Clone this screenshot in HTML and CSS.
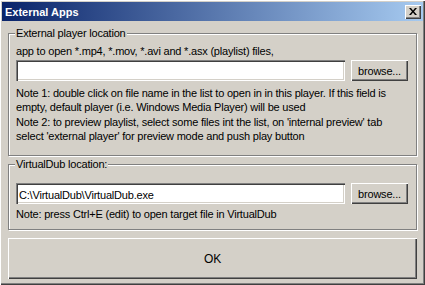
FILE: index.html
```html
<!DOCTYPE html>
<html lang="en">
<head>
    <meta charset="UTF-8">
    <title>External Apps</title>
    <link rel="stylesheet" href="styles.css">
</head>
<body>
    <div class="window">
        <div class="titlebar">
            <span class="title">External Apps</span>
            <button class="close" type="button">
                <svg width="8" height="7" viewBox="0 0 8 7">
                    <path d="M0 0h2l2 2.5 2-2.5h2l-3 3.5 3 3.5h-2l-2-2.5-2 2.5h-2l3-3.5z" fill="#000"/>
                </svg>
            </button>
        </div>

        <div class="content">
            <fieldset class="group first">
                <legend>External player location</legend>
                <p class="line">app to open *.mp4, *.mov, *.avi and *.asx (playlist) files,</p>
                <div class="row">
                    <input type="text" class="field" value="">
                    <button class="btn browse" type="button">browse...</button>
                </div>
                <p class="note">Note 1: double click on file name in the list to open in in this player. If this field is empty, default player (i.e. Windows Media Player) will be used</p>
                <p class="note second">Note 2: to preview playlist, select some files int the list, on 'internal preview' tab select 'external player' for preview mode and push play button</p>
            </fieldset>

            <fieldset class="group last">
                <legend>VirtualDub location:</legend>
                <div class="row">
                    <input type="text" class="field" value="C:\VirtualDub\VirtualDub.exe">
                    <button class="btn browse" type="button">browse...</button>
                </div>
                <p class="note tip">Note: press Ctrl+E (edit) to open target file in VirtualDub</p>
            </fieldset>

            <button class="btn ok" type="button">OK</button>
        </div>
    </div>
</body>
</html>
```

FILE: styles.css
```css
/* Classic dialog look */
body {
    margin: 0;
    font-family: "Liberation Sans", Arial, sans-serif;
    font-size: 11px;
    letter-spacing: -0.2px;
    color: #000;
}

.window {
    box-sizing: border-box;
    width: 425px;
    height: 285px;
    padding: 2px;
    background: #d4d0c8;
    box-shadow: inset 1px 1px 0 #fff, inset -1px -1px 0 #404040, inset -2px -2px 0 #808080;
}

.titlebar {
    display: flex;
    align-items: center;
    justify-content: space-between;
    height: 19px;
    padding: 0 2px 0 3px;
    background: linear-gradient(to right, #0a246a, #a6caf0);
}

.title {
    color: #fff;
    font-weight: bold;
    font-size: 11px;
    letter-spacing: 0;
}

.close {
    display: flex;
    align-items: center;
    justify-content: center;
    width: 16px;
    height: 14px;
    padding: 0;
    border: none;
    background: #d4d0c8;
    box-shadow: inset 1px 1px 0 #fff, inset -1px -1px 0 #404040, inset -2px -2px 0 #808080;
}

.content {
    display: flex;
    flex-direction: column;
    padding: 5px 6px 0 6px;
}

.group {
    margin: 0;
    padding: 4px 8px 12px 7px;
    border: 1px solid #808080;
    box-shadow: inset 1px 1px 0 #fff, 1px 1px 0 #fff;
}

.group.last {
    margin-top: 1px;
    padding-top: 10px;
    padding-bottom: 8px;
}

legend {
    padding: 0 1px;
    margin-left: -1px;
    line-height: 14px;
    background: #d4d0c8;
}

.line, .note {
    margin: 0;
    line-height: 14px;
}

.note {
    margin-top: 5px;
}

.note.second {
    margin-top: 1px;
}

.note.tip {
    margin-top: 3px;
}

.row {
    display: flex;
    justify-content: space-between;
    margin-top: 2px;
}

.field {
    box-sizing: border-box;
    width: 329px;
    height: 21px;
    margin: 0;
    padding: 2px 3px 0;
    border: none;
    background: #fff;
    font: inherit;
    letter-spacing: inherit;
    color: #000;
    outline: none;
    box-shadow: inset 1px 1px 0 #808080, inset 2px 2px 0 #404040, inset -1px -1px 0 #fff, inset -2px -2px 0 #d4d0c8;
}

.btn {
    margin: 0;
    padding: 0;
    border: none;
    background: #d4d0c8;
    font: inherit;
    letter-spacing: inherit;
    color: #000;
    box-shadow: inset 1px 1px 0 #fff, inset -1px -1px 0 #404040, inset -2px -2px 0 #808080;
}

.browse {
    width: 57px;
    height: 21px;
}

.ok {
    height: 41px;
    margin-top: 8px;
    font-size: 12px;
}
```
